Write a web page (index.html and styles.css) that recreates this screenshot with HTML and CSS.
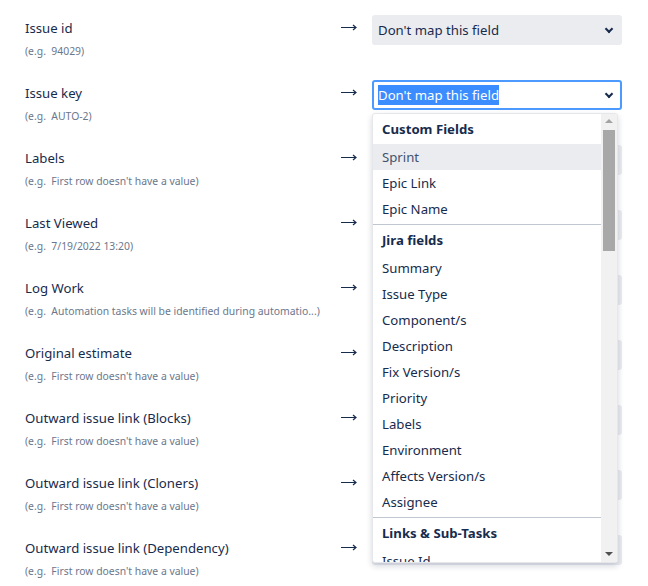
FILE: index.html
```html
<!DOCTYPE html>
<html lang="en">
<head>
    <meta charset="UTF-8">
    <title>Field mapping</title>
    <link rel="stylesheet" href="styles.css">
</head>
<body>
    <div class="mapping">
        <div class="row">
            <div class="field">
                <div class="field-name">Issue id</div>
                <div class="field-hint">(e.g.&nbsp; 94029)</div>
            </div>
            <div class="arrow"><svg width="16" height="9" viewBox="0 0 16 9"><path d="M0 4.5H15M12 2l3 2.5-3 2.5" fill="none" stroke="#172b4d" stroke-width="1.2"/></svg></div>
            <div class="select">Don't map this field<span class="chevron"></span></div>
        </div>
        <div class="row">
            <div class="field">
                <div class="field-name">Issue key</div>
                <div class="field-hint">(e.g.&nbsp; AUTO-2)</div>
            </div>
            <div class="arrow"><svg width="16" height="9" viewBox="0 0 16 9"><path d="M0 4.5H15M12 2l3 2.5-3 2.5" fill="none" stroke="#172b4d" stroke-width="1.2"/></svg></div>
            <div class="select focused"><span class="selected-text">Don't map this field</span><span class="chevron"></span></div>
        </div>
        <div class="row">
            <div class="field">
                <div class="field-name">Labels</div>
                <div class="field-hint">(e.g.&nbsp; First row doesn't have a value)</div>
            </div>
            <div class="arrow"><svg width="16" height="9" viewBox="0 0 16 9"><path d="M0 4.5H15M12 2l3 2.5-3 2.5" fill="none" stroke="#172b4d" stroke-width="1.2"/></svg></div>
            <div class="select">Don't map this field<span class="chevron"></span></div>
        </div>
        <div class="row">
            <div class="field">
                <div class="field-name">Last Viewed</div>
                <div class="field-hint">(e.g.&nbsp; 7/19/2022 13:20)</div>
            </div>
            <div class="arrow"><svg width="16" height="9" viewBox="0 0 16 9"><path d="M0 4.5H15M12 2l3 2.5-3 2.5" fill="none" stroke="#172b4d" stroke-width="1.2"/></svg></div>
            <div class="select">Don't map this field<span class="chevron"></span></div>
        </div>
        <div class="row">
            <div class="field">
                <div class="field-name">Log Work</div>
                <div class="field-hint">(e.g.&nbsp; Automation tasks will be identified during automatio...)</div>
            </div>
            <div class="arrow"><svg width="16" height="9" viewBox="0 0 16 9"><path d="M0 4.5H15M12 2l3 2.5-3 2.5" fill="none" stroke="#172b4d" stroke-width="1.2"/></svg></div>
            <div class="select">Don't map this field<span class="chevron"></span></div>
        </div>
        <div class="row">
            <div class="field">
                <div class="field-name">Original estimate</div>
                <div class="field-hint">(e.g.&nbsp; First row doesn't have a value)</div>
            </div>
            <div class="arrow"><svg width="16" height="9" viewBox="0 0 16 9"><path d="M0 4.5H15M12 2l3 2.5-3 2.5" fill="none" stroke="#172b4d" stroke-width="1.2"/></svg></div>
            <div class="select">Don't map this field<span class="chevron"></span></div>
        </div>
        <div class="row">
            <div class="field">
                <div class="field-name">Outward issue link (Blocks)</div>
                <div class="field-hint">(e.g.&nbsp; First row doesn't have a value)</div>
            </div>
            <div class="arrow"><svg width="16" height="9" viewBox="0 0 16 9"><path d="M0 4.5H15M12 2l3 2.5-3 2.5" fill="none" stroke="#172b4d" stroke-width="1.2"/></svg></div>
            <div class="select">Don't map this field<span class="chevron"></span></div>
        </div>
        <div class="row">
            <div class="field">
                <div class="field-name">Outward issue link (Cloners)</div>
                <div class="field-hint">(e.g.&nbsp; First row doesn't have a value)</div>
            </div>
            <div class="arrow"><svg width="16" height="9" viewBox="0 0 16 9"><path d="M0 4.5H15M12 2l3 2.5-3 2.5" fill="none" stroke="#172b4d" stroke-width="1.2"/></svg></div>
            <div class="select">Don't map this field<span class="chevron"></span></div>
        </div>
        <div class="row">
            <div class="field">
                <div class="field-name">Outward issue link (Dependency)</div>
                <div class="field-hint">(e.g.&nbsp; First row doesn't have a value)</div>
            </div>
            <div class="arrow"><svg width="16" height="9" viewBox="0 0 16 9"><path d="M0 4.5H15M12 2l3 2.5-3 2.5" fill="none" stroke="#172b4d" stroke-width="1.2"/></svg></div>
            <div class="select">Don't map this field<span class="chevron"></span></div>
        </div>

        <!-- open dropdown for Issue key -->
        <div class="dropdown">
            <div class="options">
                <div class="group">
                    <div class="group-title">Custom Fields</div>
                    <div class="option hover">Sprint</div>
                    <div class="option">Epic Link</div>
                    <div class="option">Epic Name</div>
                </div>
                <div class="group">
                    <div class="group-title">Jira fields</div>
                    <div class="option">Summary</div>
                    <div class="option">Issue Type</div>
                    <div class="option">Component/s</div>
                    <div class="option">Description</div>
                    <div class="option">Fix Version/s</div>
                    <div class="option">Priority</div>
                    <div class="option">Labels</div>
                    <div class="option">Environment</div>
                    <div class="option">Affects Version/s</div>
                    <div class="option">Assignee</div>
                </div>
                <div class="group">
                    <div class="group-title">Links &amp; Sub-Tasks</div>
                    <div class="option">Issue Id</div>
                </div>
            </div>
            <div class="scrollbar">
                <div class="scroll-btn up"></div>
                <div class="scroll-track"><div class="scroll-thumb"></div></div>
                <div class="scroll-btn down"></div>
            </div>
        </div>
    </div>
</body>
</html>
```

FILE: styles.css
```css
body {
    margin: 0;
    background: #fff;
    font-family: "Noto Sans", "Open Sans", sans-serif;
    color: #172b4d;
}
.mapping {
    position: relative;
    padding-left: 25px;
}
.row {
    display: flex;
    align-items: flex-start;
    height: 65px;
    padding-top: 15px;
    box-sizing: border-box;
}
.field {
    width: 316px;
    padding-top: 3px;
}
.field-name {
    font-size: 13.2px;
    line-height: 20px;
}
.field-hint {
    font-size: 10.4px;
    line-height: 16px;
    margin-top: 5px;
    color: #6b778c;
}
.arrow {
    width: 31px;
    padding-top: 8px;
}
.arrow svg {
    display: block;
}
.select {
    position: relative;
    width: 250px;
    height: 30px;
    box-sizing: border-box;
    background: #ebecf0;
    border: 2px solid #ebecf0;
    border-radius: 3px;
    padding-left: 4px;
    font-size: 13.2px;
    line-height: 27px;
}
.select.focused {
    background: #fff;
    border-color: #4c9aff;
}
.selected-text {
    background: #3b8cff;
    color: #fff;
    padding: 1px 0;
}
.chevron {
    position: absolute;
    right: 8px;
    top: 9px;
    width: 4px;
    height: 4px;
    border-right: 2px solid #172b4d;
    border-bottom: 2px solid #172b4d;
    transform: rotate(45deg);
}
.dropdown {
    position: absolute;
    left: 372px;
    top: 113px;
    width: 246px;
    height: 450px;
    box-sizing: border-box;
    background: #fff;
    border: 1px solid #e6e7ea;
    border-radius: 3px;
    box-shadow: 0 3px 6px rgba(9, 30, 66, 0.18);
    display: flex;
    overflow: hidden;
}
.options {
    flex: 1;
    overflow: hidden;
}
.group {
    padding-bottom: 2px;
    border-bottom: 1px solid #c1c7d0;
}
.group-title {
    height: 30px;
    line-height: 30px;
    padding-left: 9px;
    font-size: 13.2px;
    font-weight: bold;
}
.option {
    height: 26px;
    line-height: 26px;
    padding-left: 9px;
    font-size: 13.2px;
}
.option.hover {
    background: #ebecf0;
    color: #42526e;
}
.scrollbar {
    width: 16px;
    background: #f1f1f1;
    display: flex;
    flex-direction: column;
}
.scroll-btn {
    height: 16px;
    position: relative;
}
.scroll-btn::after {
    content: "";
    position: absolute;
    left: 4px;
    border-left: 4px solid transparent;
    border-right: 4px solid transparent;
}
.scroll-btn.up::after {
    top: 5px;
    border-bottom: 4px solid #a3a3a3;
}
.scroll-btn.down::after {
    top: 6px;
    border-top: 4px solid #505050;
}
.scroll-track {
    flex: 1;
    padding: 0 2px;
}
.scroll-thumb {
    height: 121px;
    background: #a8a8a8;
}
```
